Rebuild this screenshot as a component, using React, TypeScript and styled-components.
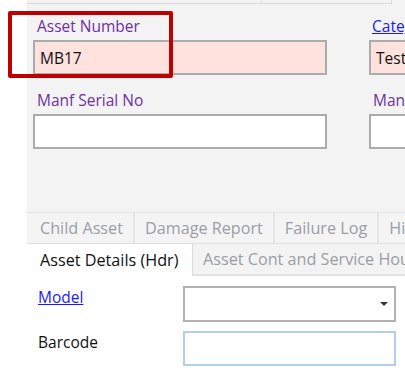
import styled, { createGlobalStyle } from 'styled-components';

const GlobalStyle = createGlobalStyle`
  html, body {
    margin: 0;
    padding: 0;
    background: #ffffff;
  }
  body {
    font-family: 'Open Sans', 'Noto Sans', sans-serif;
  }
`;

const topCells = [235, 130];

const fieldRows = [
  {
    left: { label: 'Asset Number', value: 'MB17', tone: 'key' as const },
    right: { label: 'Category', value: 'Test', tone: 'key' as const, link: true },
  },
  {
    left: { label: 'Manf Serial No', value: '', tone: 'plain' as const },
    right: { label: 'Manf', value: '', tone: 'plain' as const },
  },
];

const upperTabs = ['Child Asset', 'Damage Report', 'Failure Log', 'History'];

export default function App() {
  return (
    <>
      <GlobalStyle />
      <Screen>
        <Gutter />
        <Main>
          <HeaderPanel>
            <TopStrip>
              {topCells.map((w, i) => (
                <TopCell key={i} $width={w} />
              ))}
            </TopStrip>

            <FormGrid>
              {fieldRows.map((row, i) => (
                <FieldRow key={i}>
                  <Field>
                    <Label>{row.left.label}</Label>
                    <TextBox $tone={row.left.tone}>{row.left.value}</TextBox>
                  </Field>
                  <Field>
                    {row.right.link ? (
                      <LinkLabel>{row.right.label}</LinkLabel>
                    ) : (
                      <Label>{row.right.label}</Label>
                    )}
                    <TextBox $tone={row.right.tone}>{row.right.value}</TextBox>
                  </Field>
                </FieldRow>
              ))}
            </FormGrid>
          </HeaderPanel>

          <UpperTabs>
            {upperTabs.map((t, i) => (
              <UpperTab key={t} $first={i === 0}>
                {t}
              </UpperTab>
            ))}
          </UpperTabs>

          <LowerTabs>
            <ActiveTab>Asset Details (Hdr)</ActiveTab>
            <InactiveTab>Asset Cont and Service Hours</InactiveTab>
          </LowerTabs>

          <DetailBody>
            <DetailRow>
              <DetailLink>Model</DetailLink>
              <Select>
                <Caret />
              </Select>
            </DetailRow>
            <DetailRow>
              <DetailLabel>Barcode</DetailLabel>
              <BarcodeBox />
            </DetailRow>
          </DetailBody>
        </Main>

        <Highlight />
      </Screen>
    </>
  );
}

const Screen = styled.div`
  position: relative;
  display: flex;
  width: 405px;
  height: 372px;
  overflow: hidden;
  background: #ffffff;
`;

const Gutter = styled.div`
  width: 27px;
  flex-shrink: 0;
  background: #ffffff;
`;

const Main = styled.div`
  display: flex;
  flex-direction: column;
  flex: 1;
  min-width: 0;
`;

const HeaderPanel = styled.div`
  height: 212px;
  background: #f3f3f3;
`;

const TopStrip = styled.div`
  display: flex;
  height: 3px;
  width: 365px;
  border-bottom: 1px solid #dcdcdc;
`;

const TopCell = styled.div<{ $width: number }>`
  width: ${({ $width }) => $width}px;
  flex-shrink: 0;
  box-sizing: border-box;
  border-right: 1px solid #dcdcdc;
`;

const FormGrid = styled.div`
  display: flex;
  flex-direction: column;
  gap: 15px;
  padding: 12px 0 0 6px;
`;

const FieldRow = styled.div`
  display: grid;
  grid-template-columns: 294px 294px;
  column-gap: 42px;
`;

const Field = styled.div`
  display: flex;
  flex-direction: column;
  gap: 4px;
`;

const Label = styled.div`
  padding-left: 4px;
  font-size: 15.5px;
  line-height: 20px;
  color: #7030a0;
  white-space: nowrap;
`;

const LinkLabel = styled(Label)`
  padding-left: 3px;
  color: #1a1aff;
  text-decoration: underline;
`;

const TextBox = styled.div<{ $tone: 'key' | 'plain' }>`
  box-sizing: border-box;
  height: 35px;
  padding: 0 5px;
  display: flex;
  align-items: center;
  font-size: 15.5px;
  color: #111111;
  background: ${({ $tone }) => ($tone === 'key' ? '#ffe1dd' : '#ffffff')};
  border: 2px solid #ababab;
`;

const UpperTabs = styled.div`
  display: flex;
  height: 30px;
  background: #f4f4f4;
  border-top: 1px solid #e4e4e4;
  border-bottom: 1px solid #dedede;
`;

const UpperTab = styled.div<{ $first: boolean }>`
  display: flex;
  align-items: center;
  padding: 0 10px 0 ${({ $first }) => ($first ? 13 : 10)}px;
  font-size: 16.2px;
  color: #9a9ea4;
  white-space: nowrap;
  border-right: 2px solid #e6e6e6;
`;

const LowerTabs = styled.div`
  display: flex;
  align-items: flex-start;
  height: 34px;
  background: #ffffff;
`;

const ActiveTab = styled.div`
  width: 165px;
  flex-shrink: 0;
  padding: 5px 0 0 13px;
  box-sizing: border-box;
  font-size: 16.2px;
  line-height: 22px;
  color: #111111;
  white-space: nowrap;
`;

const InactiveTab = styled.div`
  height: 32px;
  box-sizing: border-box;
  padding: 4px 0 0 10px;
  font-size: 16.2px;
  line-height: 22px;
  color: #9a9ea4;
  white-space: nowrap;
  background: #f3f3f3;
  border-left: 1px solid #dadada;
  border-bottom: 2px solid #e2e2e2;
`;

const DetailBody = styled.div`
  display: flex;
  flex-direction: column;
  gap: 9px;
  padding: 8px 9px 0 11px;
`;

const DetailRow = styled.div`
  display: grid;
  grid-template-columns: 145px 213px;
  align-items: center;
`;

const DetailLabel = styled.div`
  align-self: start;
  padding-top: 1px;
  font-size: 15.5px;
  line-height: 20px;
  color: #111111;
`;

const DetailLink = styled(DetailLabel)`
  color: #1a1aff;
  text-decoration: underline;
`;

const Select = styled.div`
  position: relative;
  box-sizing: border-box;
  height: 36px;
  display: flex;
  align-items: center;
  justify-content: flex-end;
  padding-right: 6px;
  background: #ffffff;
  border: 2px solid #b1b1b1;
`;

const Caret = styled.span`
  width: 0;
  height: 0;
  border-left: 4px solid transparent;
  border-right: 4px solid transparent;
  border-top: 4px solid #333333;
`;

const BarcodeBox = styled.div`
  box-sizing: border-box;
  height: 35px;
  background: #ffffff;
  border: 2px solid #b4cdee;
`;

const Highlight = styled.div`
  position: absolute;
  left: 8px;
  top: 11px;
  width: 165px;
  height: 67px;
  box-sizing: border-box;
  border: 4px solid #c00000;
  border-radius: 2px;
  pointer-events: none;
`;
